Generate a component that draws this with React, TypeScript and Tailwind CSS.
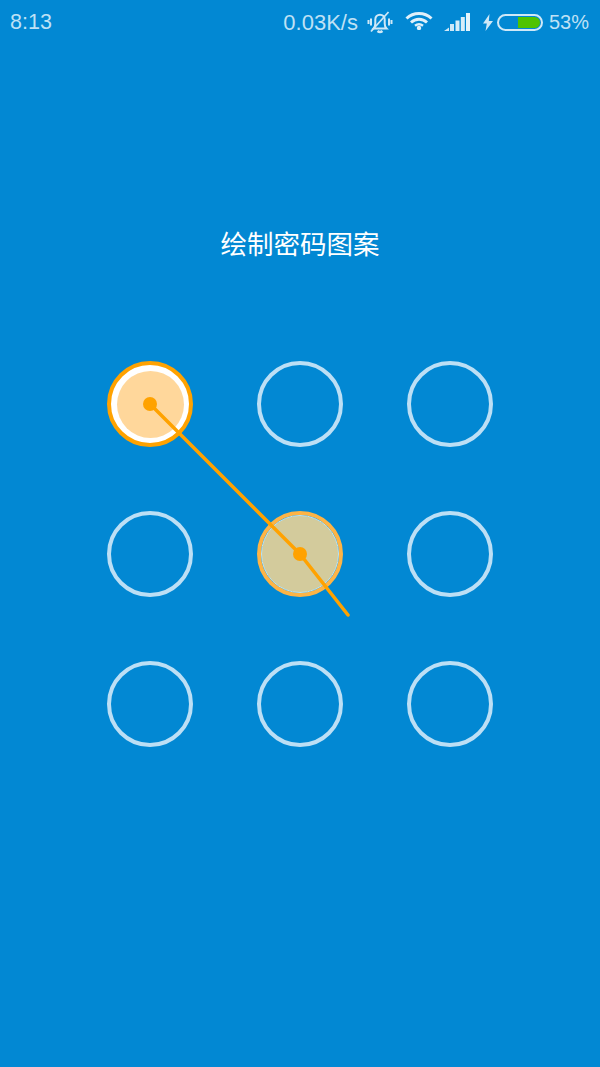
import React from "react";

const font = { fontFamily: '"Liberation Sans", "Noto Sans CJK SC", sans-serif' };

function MuteIcon() {
  return (
    <svg width="26" height="24" viewBox="0 0 26 24" fill="none" stroke="#cfe8f7" strokeWidth="2">
      <path d="M6.500 18.500h13c-1.400-1.400-1.800-2.600-1.800-5V9.500c0-2.800-2-4.800-4.700-4.800S8.300 6.700 8.300 9.500v4c0 2.400-.4 3.600-1.800 5z" />
      <path d="M10.500 21c1.500 1.200 3.500 1.200 5 0" strokeWidth="2.400" />
      <path d="M4 8.500v7M1.500 10v4M22 8.500v7M24.500 10v4" strokeWidth="2" />
      <path d="M4 21.500L21.500 2" strokeWidth="1.800" />
    </svg>
  );
}

function WifiIcon() {
  return (
    <svg width="28" height="19" viewBox="0 0 28 19" fill="none" stroke="#e0f0fa" strokeWidth="3">
      <path d="M1.500 7.500C8.500 .8 19.500 .8 26.500 7.500" />
      <path d="M6 11.500c4.700-4.200 11.300-4.200 16 0" />
      <path d="M10 14.800c2.500-1.900 5.500-1.900 8 0" strokeWidth="2.500" />
      <circle cx="14" cy="17" r="2.200" fill="#e0f0fa" stroke="none" />
    </svg>
  );
}

function SignalIcon() {
  return (
    <svg width="26" height="18" viewBox="0 0 26 18" fill="#cfe8f7">
      <polygon points="0,18 5,18 5,14.500" />
      <rect x="6" y="11" width="4" height="7" />
      <rect x="11.500" y="7.500" width="4" height="10.500" fill="#d8edf9" />
      <rect x="16.800" y="4" width="4" height="14" fill="#d8edf9" />
      <rect x="22" y="0" width="4" height="18" fill="#e4f3fb" />
    </svg>
  );
}

function BoltIcon() {
  return (
    <svg width="10" height="17" viewBox="0 0 10 17" fill="#cfe8f7">
      <path d="M6.500 0L0 9.500h3.800L2.500 17 10 7H5.800z" />
    </svg>
  );
}

function Battery() {
  return (
    <div className="flex h-[17px] w-[46px] items-center justify-end rounded-full border-2 border-[#cfe8f7] pr-[1px]">
      <div className="h-[11px] w-[22px] rounded-r-full bg-[#4fc300]" />
    </div>
  );
}

function Plain() {
  return <div className="h-[86px] w-[86px] rounded-full border-4 border-[#bcdff5]" />;
}

function First() {
  return (
    <div className="flex h-[86px] w-[86px] items-center justify-center rounded-full border-4 border-[#ffa200] bg-white">
      <div className="flex h-[67px] w-[67px] items-center justify-center rounded-full bg-[#ffd79b]">
        <div className="h-[14px] w-[14px] rounded-full bg-[#ffa200]" />
      </div>
    </div>
  );
}

function Second() {
  return (
    <div className="flex h-[86px] w-[86px] items-center justify-center rounded-full border-4 border-[#fdb446]">
      <div className="flex h-[78px] w-[78px] items-center justify-center rounded-full border border-[#bfe4ef] bg-[#d3cb9c]">
        <div className="h-[14px] w-[14px] rounded-full bg-[#ffa200]" />
      </div>
    </div>
  );
}

export default function App() {
  return (
    <div style={font} className="relative flex h-[1067px] w-[600px] flex-col overflow-hidden bg-[#0288d3]">
      <div className="flex h-[44px] items-center justify-between pl-[10px] pr-[11px] text-[21.500px] text-[#bfe1f5]">
        <span className="mt-[2px] leading-none">8:13</span>
        <div className="flex items-center">
          <span className="mt-[2px] text-[22px] leading-none">0.03K/s</span>
          <div className="ml-[9px]"><MuteIcon /></div>
          <div className="ml-[12px] -mt-[3px]"><WifiIcon /></div>
          <div className="ml-[11px] mt-[-1px]"><SignalIcon /></div>
          <div className="ml-[13px]"><BoltIcon /></div>
          <div className="ml-[4px]"><Battery /></div>
          <span className="ml-[6px] text-[20px] leading-none">53%</span>
        </div>
      </div>

      <div className="mt-[186px] text-center text-[26.500px] leading-[30px] text-white">绘制密码图案</div>

      <div className="mt-[101px] grid grid-cols-[86px_86px_86px] justify-center gap-[64px]">
        <First />
        <Plain />
        <Plain />
        <Plain />
        <Second />
        <Plain />
        <Plain />
        <Plain />
        <Plain />
      </div>

      <svg className="absolute left-0 top-0" width="600" height="1067" fill="none">
        <polyline
          points="150,404 300,554 348,615"
          stroke="#ffa200"
          strokeWidth="3.500"
          strokeLinecap="round"
          strokeLinejoin="round"
        />
      </svg>
    </div>
  );
}
